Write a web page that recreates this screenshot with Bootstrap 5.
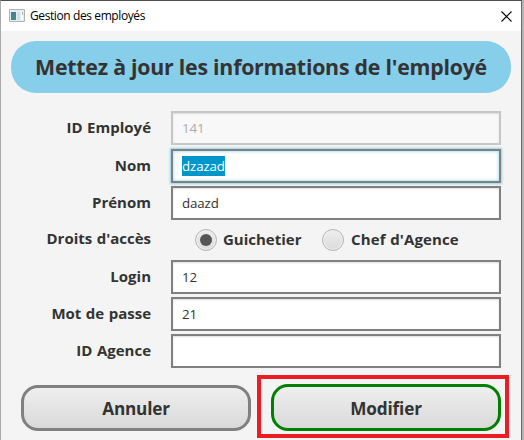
<!DOCTYPE html>
<html lang="fr">
<head>
<meta charset="utf-8">
<meta name="viewport" content="width=device-width, initial-scale=1">
<title>Gestion des employés</title>
<link href="https://cdn.jsdelivr.net/npm/bootstrap@5.3.0/dist/css/bootstrap.min.css" rel="stylesheet">
<style>
body{width:524px;height:440px;background:#b4b4b4;font-family:"Open Sans","Noto Sans",sans-serif;color:#333}
.window{width:522px;height:440px;background:#f4f4f4;border-top:1px solid #4d4d50;border-left:1px solid #aaa;border-right:1px solid #6b6b6b}
.titlebar{height:30px;background:#fff;color:#000;font-size:12px;padding:0 9px 0 8px}
.titlebar .caption{margin-left:5px;letter-spacing:-.4px}
.banner{height:52px;margin:10px 10px 0;border-radius:25px;background:#87ceeb;font-size:21.3px;letter-spacing:-.23px;font-weight:700;white-space:nowrap}
.fields{margin:18px 20px 0 20px}
.field-row{height:34px;margin-bottom:3px}
.field-row.first{margin-bottom:4px}
.field-row label{font-size:15px;font-weight:700;line-height:33px;white-space:nowrap;word-spacing:.6px}
.field-name{flex:0 0 130px;margin-right:20px;text-align:right}
.form-control{height:34px;border:2px solid #808080;border-radius:0;padding:0 9px;font-size:13.3px;letter-spacing:-.12px;line-height:30px;color:#333;background:#fff;box-shadow:inset 0 1px 2px #ddd}
.form-control.off{color:#adadad;border-color:#c6c6c6;background:#f8f8f8}
.form-control.active{box-shadow:0 0 2px 1px #8fd3ea,inset 0 0 3px 1px #b5e3f2}
.picked{display:inline-block;height:20px;line-height:20px;background:#0096c9;color:#fff;vertical-align:middle;margin-top:-2px}
.radio-dot{width:22px;height:22px;border:1px solid #b5b5b5;border-radius:50%;background:linear-gradient(#eee,#dadada);box-shadow:inset 0 0 0 1px #f1f1f1}
.radio-dot i{width:12px;height:12px;border-radius:50%;background:#555}
.radio-text{margin-left:6px;padding-bottom:2px}
.radio-text.wide{width:99px}
.field-row .radio-text.agency{margin-left:7px;letter-spacing:.12px}
.action{width:230px;height:46px;border:3px solid #808080;border-radius:17px;background:linear-gradient(#efefef,#d9d9d9);font-size:17.2px;letter-spacing:-.15px;font-weight:700;color:#333;padding:1px 0 0;line-height:39px}
.action.confirm{height:47px;border-color:#008000}
.action.cancel{margin-top:2px;letter-spacing:-.2px}
.actions{margin:7px 12px 0 20px}
.marked{width:252px;height:63px;border:4px solid #ed1c24;padding:5px 4px 3px 10px}
</style>
</head>
<body class="overflow-hidden">
<main class="window overflow-hidden">
  <header class="titlebar d-flex align-items-center">
    <svg width="16" height="14" viewBox="0 0 16 14"><defs><linearGradient id="g" x2="1" y2="1"><stop stop-color="#4b76b8"/><stop offset="1" stop-color="#3c9b62"/></linearGradient></defs><path fill="#e9edf0" stroke="#aeb3b7" d="M.5.5h15v12H.5z"/><path fill="url(#g)" d="M2 3h5v8H2z"/><path fill="#d6e0e4" d="M8 3h3v8H8z"/><path fill="#fff" d="M12 3h2v8h-2z"/><path fill="#93b8b0" d="M13 3h1v3h-1z"/></svg>
    <span class="caption">Gestion des employés</span>
    <svg class="ms-auto" width="11" height="11" viewBox="0 0 11 11"><path d="M.5.5l10 10M10.5.5l-10 10" stroke="#000" stroke-width="1.1"/></svg>
  </header>
  <h1 class="banner d-flex align-items-center justify-content-center mb-0"><span>Mettez à jour les informations de l'employé</span></h1>
  <form class="fields">
    <div class="field-row first d-flex"><label class="field-name">ID Employé</label><div class="form-control off">141</div></div>
    <div class="field-row d-flex"><label class="field-name">Nom</label><div class="form-control active"><span class="picked">dzazad</span></div></div>
    <div class="field-row d-flex"><label class="field-name">Prénom</label><div class="form-control">daazd</div></div>
    <div class="field-row d-flex align-items-center"><label class="field-name pb-1">Droits d'accès</label>
      <span class="radio-dot d-flex align-items-center justify-content-center flex-shrink-0 ms-4"><i></i></span><label class="radio-text wide">Guichetier</label>
      <span class="radio-dot flex-shrink-0"></span><label class="radio-text agency">Chef d'Agence</label></div>
    <div class="field-row d-flex"><label class="field-name">Login</label><div class="form-control">12</div></div>
    <div class="field-row d-flex"><label class="field-name">Mot de passe</label><div class="form-control">21</div></div>
    <div class="field-row d-flex mb-0"><label class="field-name">ID Agence</label><div class="form-control"></div></div>
  </form>
  <div class="actions d-flex justify-content-between align-items-center">
    <button type="button" class="btn action cancel">Annuler</button>
    <div class="marked"><button type="button" class="btn action confirm">Modifier</button></div>
  </div>
</main>
<script src="https://cdn.jsdelivr.net/npm/bootstrap@5.3.0/dist/js/bootstrap.bundle.min.js"></script>
</body>
</html>
